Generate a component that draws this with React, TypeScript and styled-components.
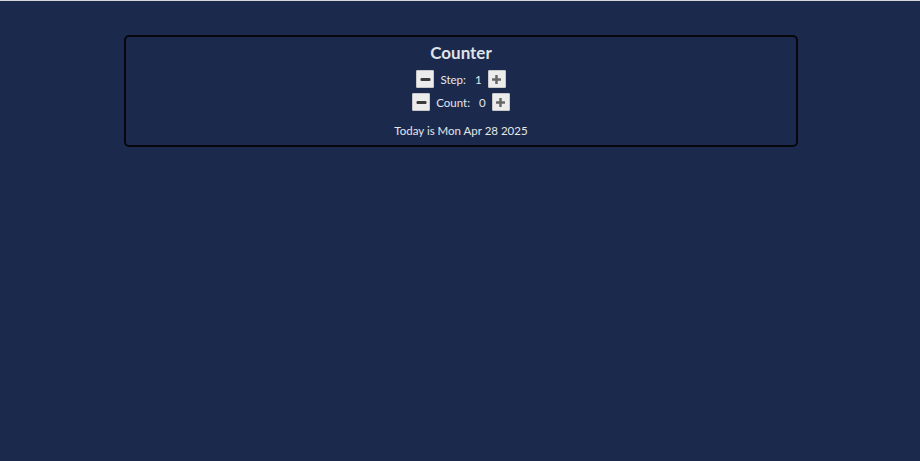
import styled, { createGlobalStyle } from 'styled-components'

const GlobalStyle = createGlobalStyle`
  html, body {
    margin: 0;
    padding: 0;
    height: 100%;
    background: #1b2a4c;
  }
  body {
    border-top: 1px solid #d4d6da;
    box-sizing: border-box;
    font-family: 'Lato', 'Open Sans', sans-serif;
    color: #e4e6ea;
  }
`

const Page = styled.div`
  padding: 34px 0 0 2px;
`

const Card = styled.section`
  width: 670px;
  margin: 0 auto;
  border: 2px solid #05070d;
  border-radius: 5px;
  display: flex;
  flex-direction: column;
  align-items: center;
  padding: 5px 0 7px;
`

const Title = styled.h2`
  margin: 0 0 6px;
  font-size: 17px;
  font-weight: 700;
  line-height: 22px;
  color: #dfe2e8;
`

const Row = styled.div`
  display: flex;
  align-items: center;
  gap: 6px;
  height: 18px;
  margin-bottom: 5px;
  font-size: 11.5px;
`

const Label = styled.span`
  margin-right: 3px;
`

const IconButton = styled.button`
  width: 18px;
  height: 18px;
  padding: 0;
  border: 1px solid #c8c8c8;
  background: #ececec;
  display: flex;
  align-items: center;
  justify-content: center;
  border-radius: 1px;
`

const DateLine = styled.p`
  margin: 7px 0 0;
  font-size: 11.5px;
  line-height: 15px;
`

function MinusIcon() {
  return (
    <svg width='11' height='11' viewBox='0 0 11 11'>
      <rect x='0.5' y='4' width='10' height='3' rx='1' fill='#3b3b3b' />
    </svg>
  )
}

function PlusIcon() {
  return (
    <svg width='11' height='11' viewBox='0 0 11 11'>
      <rect x='1' y='4.25' width='9' height='2.5' rx='0.5' fill='#666' />
      <rect x='4.25' y='1' width='2.5' height='9' rx='0.5' fill='#666' />
    </svg>
  )
}

export default function App() {
  return (
    <>
      <GlobalStyle />
      <Page>
        <Card>
          <Title>Counter</Title>
          <Row>
            <IconButton aria-label='decrease step'>
              <MinusIcon />
            </IconButton>
            <Label>Step:</Label>
            <span>1</span>
            <IconButton aria-label='increase step'>
              <PlusIcon />
            </IconButton>
          </Row>
          <Row>
            <IconButton aria-label='decrease count'>
              <MinusIcon />
            </IconButton>
            <Label>Count:</Label>
            <span>0</span>
            <IconButton aria-label='increase count'>
              <PlusIcon />
            </IconButton>
          </Row>
          <DateLine>Today is Mon Apr 28 2025</DateLine>
        </Card>
      </Page>
    </>
  )
}
